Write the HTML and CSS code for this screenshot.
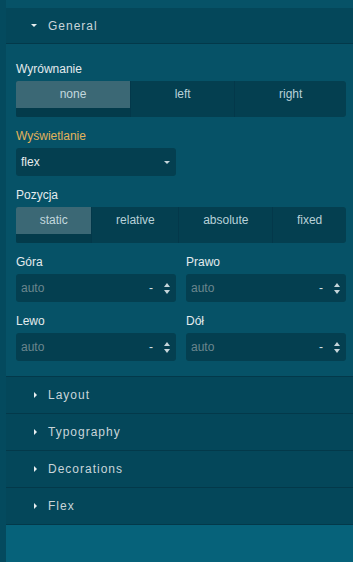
FILE: index.html
```html
<!DOCTYPE html>
<html lang="pl">
<head>
<meta charset="utf-8">
<title>Style panel</title>
<link rel="stylesheet" href="styles.css">
</head>
<body>
<div class="app">
  <div class="strip"></div>
  <div class="panel">
    <div class="top-fill"></div>
    <section class="sect open">
      <div class="sect-head"><span class="ico"><span class="caret-down"></span></span><span class="sect-title">General</span></div>
      <div class="sect-body">
        <div class="field">
          <div class="label">Wyrównanie</div>
          <div class="group">
            <div class="btn sel">none</div>
            <div class="btn">left</div>
            <div class="btn">right</div>
          </div>
        </div>
        <div class="field">
          <div class="label changed">Wyświetlanie</div>
          <div class="select"><span>flex</span><span class="caret-down light"></span></div>
        </div>
        <div class="field">
          <div class="label">Pozycja</div>
          <div class="group">
            <div class="btn sel">static</div>
            <div class="btn">relative</div>
            <div class="btn">absolute</div>
            <div class="btn">fixed</div>
          </div>
        </div>
        <div class="grid2">
          <div class="field">
            <div class="label">Góra</div>
            <div class="num"><span class="ph">auto</span><span class="unit">-</span><span class="spin"><i class="up"></i><i class="down"></i></span></div>
          </div>
          <div class="field">
            <div class="label">Prawo</div>
            <div class="num"><span class="ph">auto</span><span class="unit">-</span><span class="spin"><i class="up"></i><i class="down"></i></span></div>
          </div>
          <div class="field">
            <div class="label">Lewo</div>
            <div class="num"><span class="ph">auto</span><span class="unit">-</span><span class="spin"><i class="up"></i><i class="down"></i></span></div>
          </div>
          <div class="field">
            <div class="label">Dół</div>
            <div class="num"><span class="ph">auto</span><span class="unit">-</span><span class="spin"><i class="up"></i><i class="down"></i></span></div>
          </div>
        </div>
      </div>
    </section>
    <section class="sect">
      <div class="sect-head"><span class="ico"><span class="caret-right"></span></span><span class="sect-title">Layout</span></div>
    </section>
    <section class="sect">
      <div class="sect-head"><span class="ico"><span class="caret-right"></span></span><span class="sect-title">Typography</span></div>
    </section>
    <section class="sect">
      <div class="sect-head"><span class="ico"><span class="caret-right"></span></span><span class="sect-title">Decorations</span></div>
    </section>
    <section class="sect">
      <div class="sect-head"><span class="ico"><span class="caret-right"></span></span><span class="sect-title">Flex</span></div>
    </section>
    <div class="bottom-fill"></div>
  </div>
</div>
</body>
</html>
```
FILE: styles.css
```css
* { box-sizing: border-box; }
html, body {
  margin: 0;
  padding: 0;
  height: 100%;
  overflow: hidden;
  background: #06627a;
  font-family: "Liberation Sans", Arial, sans-serif;
  font-size: 12px;
}
.app {
  display: flex;
  height: 562px;
}
.strip {
  width: 6px;
  flex: none;
  background: #044a5e;
}
.panel {
  flex: 1;
  display: flex;
  flex-direction: column;
  background: #06627a;
}
.top-fill {
  height: 8px;
  background: #065267;
}
.sect {
  border-bottom: 1px solid #03394a;
}
.sect-head {
  height: 36px;
  display: flex;
  align-items: center;
  gap: 11px;
  padding-left: 25px;
  background: #04475a;
  color: #c9d5d9;
  letter-spacing: 1px;
  font-size: 12px;
}
.sect.open .sect-head {
  border-bottom: 1px solid #03394a;
}
.ico {
  width: 6px;
  display: flex;
  justify-content: center;
  align-items: center;
}
.caret-down {
  width: 0;
  height: 0;
  border-left: 3px solid transparent;
  border-right: 3px solid transparent;
  border-top: 3px solid #e8eef0;
}
.caret-down.light { border-top-color: #c6d6db; }
.caret-right {
  width: 0;
  height: 0;
  border-top: 3px solid transparent;
  border-bottom: 3px solid transparent;
  border-left: 3px solid #e8eef0;
  margin-left: 2px;
}
.sect-body {
  background: #065267;
  padding: 18px 7px 15px 10px;
  display: flex;
  flex-direction: column;
  gap: 12px;
}
.field {
  display: flex;
  flex-direction: column;
  gap: 5px;
}
.label {
  line-height: 14px;
  color: #e4ebed;
}
.label.changed { color: #e3b25a; }
.group {
  display: flex;
  height: 36px;
  background: #043f50;
  border-radius: 2px 3px 3px 2px;
  overflow: hidden;
}
.btn {
  flex: 1 1 auto;
  text-align: center;
  line-height: 27px;
  height: 36px;
  color: #b8d1d9;
  border-left: 1px solid #03384a;
}
.btn:first-child { border-left: none; }
.btn.sel {
  background: linear-gradient(#3b6875 0 27px, #033b4b 27px);
  color: #c3d8de;
}
.select {
  width: 160px;
  height: 28px;
  border-radius: 3px;
  background: #043f50;
  display: flex;
  align-items: center;
  justify-content: space-between;
  padding: 0 6px 0 5px;
  color: #e6ecee;
}
.grid2 {
  display: grid;
  grid-template-columns: 1fr 1fr;
  column-gap: 10px;
  row-gap: 12px;
}
.num {
  height: 28px;
  border-radius: 3px;
  background: #043f50;
  display: flex;
  align-items: center;
  padding: 0 6px 0 5px;
}
.ph {
  flex: 1;
  color: #6a868e;
}
.unit {
  color: #d8e3e6;
  margin-right: 10px;
}
.spin {
  display: flex;
  flex-direction: column;
  gap: 3px;
  width: 7px;
  align-items: center;
}
.spin i {
  display: block;
  width: 0;
  height: 0;
  border-left: 3.5px solid transparent;
  border-right: 3.5px solid transparent;
}
.spin .up { border-bottom: 4px solid #c6d6db; }
.spin .down { border-top: 4px solid #c6d6db; }
.bottom-fill {
  flex: 1;
  background: #06627a;
}
```
